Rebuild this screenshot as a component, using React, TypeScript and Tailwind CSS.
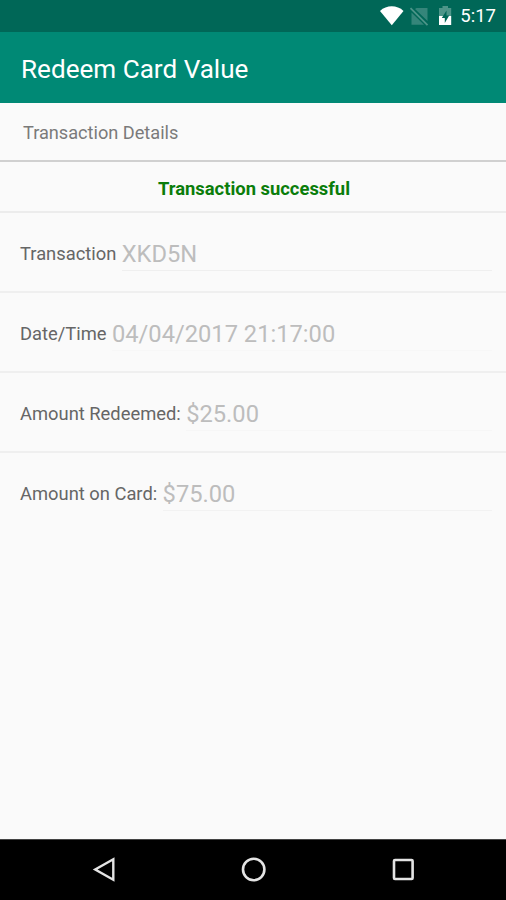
const details = [
  { label: "Transaction", value: "XKD5N", line: "border-[#efefef]" },
  { label: "Date/Time", value: "04/04/2017 21:17:00", line: "border-[#f7f7f7]" },
  { label: "Amount Redeemed:", value: "$25.00", line: "border-[#f6f6f6]" },
  { label: "Amount on Card:", value: "$75.00", line: "border-[#f2f2f2]" },
];

function StatusBar() {
  return (
    <div className="flex h-8 items-center justify-end bg-[#006757] pr-[10px] text-white">
      <svg width="76" height="32" viewBox="0 0 76 32" className="mr-[6px]">
        <path d="M2 11C8.5 4.8 19 4.8 25.5 11L13.8 25.2Z" fill="#fff" />
        <path d="M38.5 8H49.5v13L37 8.9ZM33.5 12.5 46 24.8H33.5Z" fill="#35857a" />
        <path d="m32.5 8.2 17 17" stroke="#4d9589" strokeWidth="1.8" />
        <path d="M64.5 6h5.5v2h3.2v8H61V8h3.5Z" fill="#4d9589" />
        <path d="M61 16h12.2v9H61Z" fill="#fff" />
        <path d="M68.5 10.5 63.8 18h3v5l4.4-7.5h-2.7Z" fill="#006757" />
      </svg>
      <span className="text-[18.5px] leading-8">5:17</span>
    </div>
  );
}

function NavBar() {
  return (
    <div className="flex h-[61px] items-center justify-between border-t border-[#444] bg-black pr-[90px] pl-[92px]">
      <svg width="26" height="28" viewBox="0 0 26 28" fill="none" stroke="#e4e4e4" strokeWidth="2.4">
        <path d="M21.3 3.3v20.4L3.2 13.5Z" />
      </svg>
      <svg width="28" height="28" viewBox="0 0 28 28" fill="none" stroke="#e4e4e4" strokeWidth="2.6">
        <circle cx="13.7" cy="13.5" r="10.7" />
      </svg>
      <svg width="26" height="28" viewBox="0 0 26 28" fill="none" stroke="#e4e4e4" strokeWidth="2.6">
        <rect x="4" y="4" width="18.6" height="19" rx="1" />
      </svg>
    </div>
  );
}

export default function App() {
  return (
    <div className="flex h-[900px] w-[506px] flex-col bg-[#fafafa] font-[Roboto,sans-serif]">
      <StatusBar />
      <header className="h-[71px] bg-[#008975] pl-[21px] text-[26.1px] text-white">
        <h1 className="leading-[75px]">Redeem Card Value</h1>
      </header>
      <main className="flex-1">
        <h2 className="h-[59px] border-b-2 border-[#d0d0d0] pl-[23px] text-[18.2px] leading-[60px] tracking-[-0.02px] text-[#7a7a7a]">
          Transaction Details
        </h2>
        <p className="h-[51px] border-b-2 border-[#ececec] pl-[2px] text-center text-[18.4px] leading-[53px] font-bold text-[#0a7d0a]">
          Transaction successful
        </p>
        <ul>
          {details.map(d => (
            <li
              key={d.label}
              className="flex h-20 items-start border-b-2 border-[#efefef] pt-[21px] pr-[14px] pl-5 last:border-b-0"
            >
              <span className="text-[18.35px] leading-[39px] text-[#666]">{d.label}</span>
              <span className={`${d.line} ml-[5.4px] h-[37px] flex-1 border-b text-[23.7px] leading-[41px] text-[#bdbdbd]`}>
                {d.value}
              </span>
            </li>
          ))}
        </ul>
      </main>
      <NavBar />
    </div>
  );
}
